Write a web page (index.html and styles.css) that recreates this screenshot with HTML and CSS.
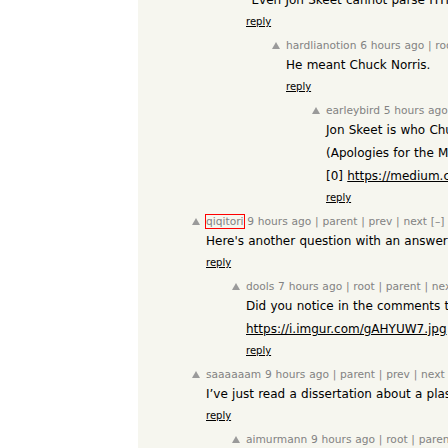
FILE: index.html
```html
<!DOCTYPE html>
<html>
<head>
<meta charset="utf-8">
<title>Comments</title>
<link rel="stylesheet" href="styles.css">
</head>
<body>
<main class="page">
  <div class="thread">

    <article class="comment l1 partial">
      <div class="vote"></div>
      <div class="body">
        <div class="text"><p>"Even Jon Skeet cannot parse HTML using regular expressions."</p></div>
        <div class="reply"><a href="#">reply</a></div>
      </div>
    </article>

    <article class="comment l2">
      <div class="vote"><svg class="arrow" viewBox="0 0 8 7"><polygon points="4,0 8,7 0,7"/></svg></div>
      <div class="body">
        <div class="comhead"><a href="#">hardlianotion</a> <a href="#">6 hours ago</a> | <a href="#">root</a> | <a href="#">parent</a> | <a href="#">next</a> [–]</div>
        <div class="text"><p>He meant Chuck Norris.</p></div>
        <div class="reply"><a href="#">reply</a></div>
      </div>
    </article>

    <article class="comment l3">
      <div class="vote"><svg class="arrow" viewBox="0 0 8 7"><polygon points="4,0 8,7 0,7"/></svg></div>
      <div class="body">
        <div class="comhead"><a href="#">earleybird</a> <a href="#">5 hours ago</a> | <a href="#">root</a> | <a href="#">parent</a> | <a href="#">next</a> [–]</div>
        <div class="text">
          <p>Jon Skeet is who Chuck Norris calls when he gets stuck.</p>
          <p>(Apologies for the Medium link [0])</p>
          <p>[0] <a href="#">https://medium.com/@jonskeet/the-facts</a></p>
        </div>
        <div class="reply"><a href="#">reply</a></div>
      </div>
    </article>

    <article class="comment l0">
      <div class="vote"><svg class="arrow" viewBox="0 0 8 7"><polygon points="4,0 8,7 0,7"/></svg></div>
      <div class="body">
        <div class="comhead"><a href="#" class="user flagged">qiqitori</a> <a href="#">9 hours ago</a> | <a href="#">parent</a> | <a href="#">prev</a> | <a href="#">next</a> [–]</div>
        <div class="text"><p>Here's another question with an answer that is equally legendary.</p></div>
        <div class="reply"><a href="#">reply</a></div>
      </div>
    </article>

    <article class="comment l1">
      <div class="vote"><svg class="arrow" viewBox="0 0 8 7"><polygon points="4,0 8,7 0,7"/></svg></div>
      <div class="body">
        <div class="comhead"><a href="#">dools</a> <a href="#">7 hours ago</a> | <a href="#">root</a> | <a href="#">parent</a> | <a href="#">next</a> [–]</div>
        <div class="text">
          <p>Did you notice in the comments that somebody linked this?</p>
          <p><a href="#">https://i.imgur.com/gAHYUW7.jpg</a></p>
        </div>
        <div class="reply"><a href="#">reply</a></div>
      </div>
    </article>

    <article class="comment l0">
      <div class="vote"><svg class="arrow" viewBox="0 0 8 7"><polygon points="4,0 8,7 0,7"/></svg></div>
      <div class="body">
        <div class="comhead"><a href="#">saaaaaam</a> <a href="#">9 hours ago</a> | <a href="#">parent</a> | <a href="#">prev</a> | <a href="#">next</a> [–]</div>
        <div class="text"><p>I’ve just read a dissertation about a plastic bag in the wind.</p></div>
        <div class="reply"><a href="#">reply</a></div>
      </div>
    </article>

    <article class="comment l1">
      <div class="vote"><svg class="arrow" viewBox="0 0 8 7"><polygon points="4,0 8,7 0,7"/></svg></div>
      <div class="body">
        <div class="comhead"><a href="#">aimurmann</a> <a href="#">9 hours ago</a> | <a href="#">root</a> | <a href="#">parent</a> | <a href="#">next</a> [–]</div>
        <div class="text"><p>That is beautiful.</p></div>
        <div class="reply"><a href="#">reply</a></div>
      </div>
    </article>

  </div>
</main>
</body>
</html>
```

FILE: styles.css
```css
html, body {
  margin: 0;
  padding: 0;
  background: #ffffff;
}

body {
  height: 448px;
  overflow: hidden;
  font-family: "DejaVu Sans", Verdana, sans-serif;
}

.page {
  margin-left: 138px;
  background: #f6f6ef;
  min-height: 448px;
  overflow: hidden;
}

.thread {
  padding-left: 52px;
  white-space: nowrap;
}

.comment {
  display: flex;
  margin-bottom: 11px;
}

.l1 { margin-left: 40px; }
.l2 { margin-left: 80px; }
.l3 { margin-left: 120px; }

.vote {
  width: 16px;
  flex: none;
}

.arrow {
  display: block;
  width: 8px;
  height: 7px;
  margin: 3px 0 0 2px;
  fill: #9a9a9a;
}

.body {
  flex: none;
}

.comhead {
  font-size: 10.67px;
  line-height: 14px;
  word-spacing: 0.035em;
  color: #828282;
}

.comhead a {
  color: #828282;
  text-decoration: none;
}

.comhead .flagged {
  outline: 1px solid #ff0000;
}

.text {
  margin-top: 5px;
  font-size: 12px;
  line-height: 15px;
  word-spacing: 0.035em;
  color: #000000;
}

.partial .text {
  margin-top: -7px;
}

.text p {
  margin: 0;
}

.text p + p {
  margin-top: 8px;
}

.text a {
  color: #000000;
  text-decoration: underline;
}

.reply {
  margin-top: 8px;
  font-size: 10px;
  line-height: 12px;
}

.reply a {
  color: #000000;
  text-decoration: underline;
}
```
